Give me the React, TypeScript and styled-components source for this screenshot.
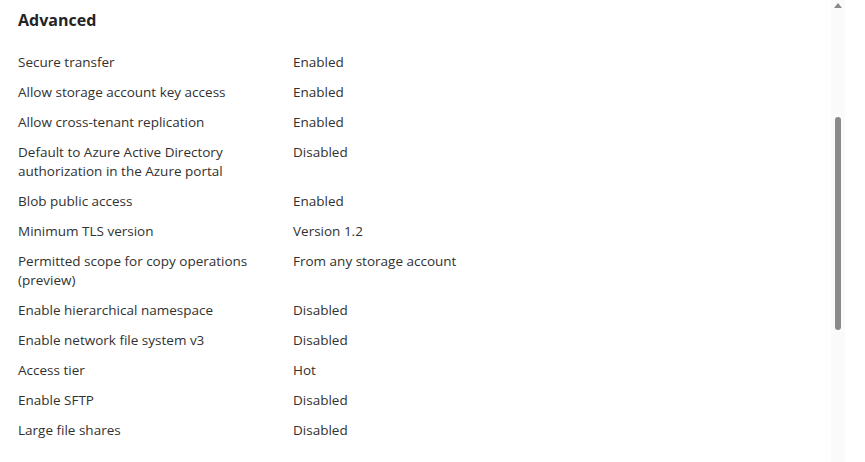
import styled, { createGlobalStyle } from 'styled-components';

interface Setting {
	label: string;
	value: string;
}

const settings: Setting[] = [
	{ label: 'Secure transfer', value: 'Enabled' },
	{ label: 'Allow storage account key access', value: 'Enabled' },
	{ label: 'Allow cross-tenant replication', value: 'Enabled' },
	{ label: 'Default to Azure Active Directory authorization in the Azure portal', value: 'Disabled' },
	{ label: 'Blob public access', value: 'Enabled' },
	{ label: 'Minimum TLS version', value: 'Version 1.2' },
	{ label: 'Permitted scope for copy operations (preview)', value: 'From any storage account' },
	{ label: 'Enable hierarchical namespace', value: 'Disabled' },
	{ label: 'Enable network file system v3', value: 'Disabled' },
	{ label: 'Access tier', value: 'Hot' },
	{ label: 'Enable SFTP', value: 'Disabled' },
	{ label: 'Large file shares', value: 'Disabled' },
];

const App: React.FC = () => {
	return (
		<>
			<GlobalStyle />
			<Page>
				<Content>
					<Title>Advanced</Title>
					<SettingList>
						{settings.map(s => (
							<SettingRow key={s.label}>
								<Label>{s.label}</Label>
								<Value>{s.value}</Value>
							</SettingRow>
						))}
					</SettingList>
				</Content>
				<ScrollTrack>
					<ScrollArrow />
					<ScrollThumb />
				</ScrollTrack>
			</Page>
		</>
	);
};

const GlobalStyle = createGlobalStyle`
	html, body {
		margin: 0;
		padding: 0;
		background: #ffffff;
	}
	body {
		font-family: 'Open Sans', 'Noto Sans', sans-serif;
		color: #323130;
	}
`;

const Page = styled.div`
	display: flex;
	width: 865px;
	height: 462px;
	overflow: hidden;
`;

const Content = styled.div`
	flex: 1;
	padding: 9px 0 0 18px;
`;

const Title = styled.h2`
	margin: 0 0 22px;
	font-size: 16px;
	font-weight: 700;
	line-height: 22px;
	color: #242424;
`;

const SettingList = styled.div`
	display: flex;
	flex-direction: column;
	gap: 11px;
`;

const SettingRow = styled.div`
	display: grid;
	grid-template-columns: 275px 1fr;
	font-size: 13.5px;
	line-height: 19px;
`;

const Label = styled.div`
	padding-right: 20px;
`;

const Value = styled.div``;

const ScrollTrack = styled.div`
	position: relative;
	width: 14px;
	margin-right: 20px;
	background: #fafafa;
`;

const ScrollArrow = styled.div`
	position: absolute;
	top: 3px;
	left: 3px;
	width: 0;
	height: 0;
	border-left: 4px solid transparent;
	border-right: 4px solid transparent;
	border-bottom: 5px solid #8a8a8a;
`;

const ScrollThumb = styled.div`
	position: absolute;
	top: 117px;
	left: 4px;
	width: 6px;
	height: 213px;
	border-radius: 3px;
	background: #8a8a8a;
`;

export default App;
